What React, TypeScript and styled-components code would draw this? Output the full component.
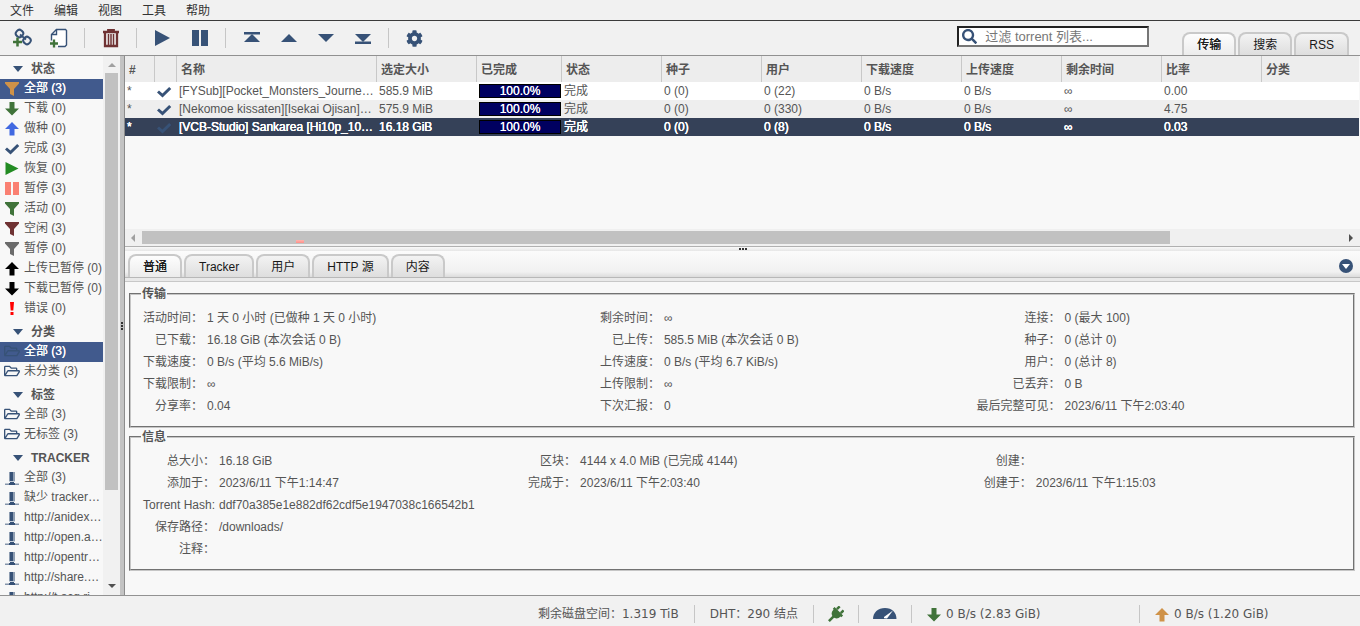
import React from "react";
import styled, { createGlobalStyle, css } from "styled-components";
import { FaCog, FaRegFolderOpen, FaSearch } from "react-icons/fa";

const navy = "#375277";
const green = "#40733a";
const maroon = "#6f3233";
const orange = "#cf9248";

const GlobalStyle = createGlobalStyle`
  * { box-sizing: border-box; }
  body {
    margin: 0;
    background: #f8f8f8;
    color: #555;
    font-family: "Liberation Sans", Arial, "Noto Sans CJK SC", sans-serif;
    font-size: 12px;
    line-height: 16px;
  }
  button, input { font: inherit; color: inherit; }
  button { background: none; border: 0; padding: 0; margin: 0; }
  svg { display: block; flex: none; }
`;

const Shell = styled.div`
  display: flex;
  flex-direction: column;
  height: 100vh;
  overflow: hidden;
`;

const MenuBar = styled.nav`
  display: flex;
  flex: none;
  height: 21px;
  background: #f1f1f1;
  border-bottom: 1px solid #3b3b3b;
`;

const MenuButton = styled.button`
  padding: 2px 10px 0;
  color: #333;
  line-height: 18px;
`;

const Toolbar = styled.header`
  display: flex;
  flex: none;
  height: 35px;
  padding: 0 11px 0 3px;
  background: #f1f1f1;
  border-bottom: 1px solid #919191;
`;

const ToolButton = styled.button`
  display: flex;
  align-items: center;
  justify-content: center;
  width: 37px;
`;

const ToolDivider = styled.span`
  align-self: center;
  width: 1px;
  height: 20px;
  margin: 0 7px;
  background: #c6c6c6;
`;

const SearchBox = styled.label`
  display: flex;
  align-items: center;
  gap: 8px;
  width: 192px;
  height: 21px;
  margin: 5px 33px 0 auto;
  padding: 0 3px;
  background: #fff;
  border: 2px solid;
  border-color: #222 #767676 #767676 #222;
`;

const SearchInput = styled.input`
  flex: 1;
  min-width: 0;
  height: 17px;
  padding: 0;
  border: 0;
  outline: 0;
  background: transparent;
  font-size: 13px;
  &::placeholder { color: #777; opacity: 1; }
`;

const TabList = styled.div<{ $top?: boolean }>`
  display: flex;
  align-items: flex-end;
  gap: 2px;
  ${(p) => p.$top && css`padding-top: 11px;`}
`;

const Tab = styled.button<{ $active?: boolean }>`
  height: 23px;
  padding: 1px 13px 0;
  line-height: 20px;
  color: #181818;
  border: 2px solid #c9c9c9;
  border-bottom: 0;
  border-radius: 8px 8px 0 0;
  background: linear-gradient(#f3f3f3, #dedede);
  white-space: nowrap;
  ${(p) =>
    p.$active &&
    css`
      background: linear-gradient(#fdfdfd, #ececec);
      text-shadow: 0 0 0 #181818;
    `}
`;

const Body = styled.div`
  display: flex;
  flex: 1;
  min-height: 0;
`;

const Sidebar = styled.aside`
  display: flex;
  flex: none;
  width: 120px;
`;

const FilterScroll = styled.div`
  flex: 1;
  min-width: 0;
  overflow: hidden;
`;

const FilterHeading = styled.h2`
  display: flex;
  align-items: center;
  height: 23px;
  margin: 0;
  padding: 4px 0 0 13px;
  font-size: 12px;
  font-weight: bold;
  line-height: 19px;
  & > svg { margin: 0 8px 2px 0; }
`;

const FilterList = styled.ul`
  margin: 0;
  padding: 0;
  list-style: none;
`;

const FilterRow = styled.button<{ $selected?: boolean }>`
  display: flex;
  align-items: center;
  gap: 4px;
  width: 100%;
  height: 20px;
  padding: 0 0 2px 4px;
  overflow: hidden;
  line-height: 18px;
  white-space: nowrap;
  color: ${(p) => (p.$selected ? "#fff" : "#555")};
  background: ${(p) => (p.$selected ? "#415a8d" : "transparent")};
  text-shadow: ${(p) => (p.$selected ? "0 0 0 #fff" : "none")};
`;

const VScroll = styled.div`
  display: flex;
  flex-direction: column;
  align-items: center;
  width: 17px;
  padding: 5px 2px 6px;
  background: #f1f1f1;
`;

const VThumb = styled.div`
  width: 13px;
  height: 79%;
  margin: 4px 0 auto;
  background: #c1c1c1;
`;

const VSplitter = styled.div`
  display: flex;
  flex: none;
  align-items: center;
  justify-content: center;
  width: 5px;
  background: #c3c3c3;
  border-right: 1px solid #8c8c8c;
`;

const Main = styled.main`
  display: flex;
  flex: 1;
  flex-direction: column;
  min-width: 0;
`;

const TorrentPane = styled.section`
  display: flex;
  flex: none;
  flex-direction: column;
  height: 191px;
  border-bottom: 1px solid #b0b0b0;
`;

const TorrentScroll = styled.div`
  flex: 1;
  overflow: hidden;
  padding-right: 1px;
`;

const TorrentTable = styled.table`
  width: 100%;
  table-layout: fixed;
  border-collapse: separate;
  border-spacing: 0;
`;

const HeadCell = styled.th`
  height: 26px;
  padding: 2px 4px 0;
  background: #ededed;
  border-right: 1px solid #c8c8c8;
  text-align: left;
  font-weight: bold;
  white-space: nowrap;
  &:last-child { border-right: 0; }
`;

const TorrentRow = styled.tr<{ $selected?: boolean }>`
  background: #fff;
  &:nth-child(even) { background: #eee; }
  ${(p) =>
    p.$selected &&
    css`
      background: #354158;
      color: #fff;
      text-shadow: 0 0 0 #fff, 0 0 0 #fff;
    `}
`;

const Cell = styled.td`
  height: 18px;
  padding: 0 2px;
  overflow: hidden;
  line-height: 18px;
  white-space: nowrap;
`;

const CheckCell = styled(Cell)`
  padding: 0 0 0 1px;
`;

const BarCell = styled(Cell)`
  padding: 0 1px 0 2px;
`;

const ProgressBar = styled.div`
  height: 14px;
  border: 1px solid #000;
  background: #000060;
  color: #fff;
  text-align: center;
  line-height: 12px;
  text-shadow: 0 0 0 #fff;
`;

const HScroll = styled.div`
  display: flex;
  align-items: center;
  gap: 4px;
  height: 17px;
  padding: 0 6px 0 5px;
  background: #f0f0f0;
`;

const HThumb = styled.div`
  position: relative;
  flex: none;
  width: 84%;
  height: 13px;
  margin-right: auto;
  background: #c1c1c1;
`;

const ThumbMark = styled.span`
  position: absolute;
  left: 154px;
  bottom: 1px;
  width: 8px;
  height: 3px;
  background: linear-gradient(#ffb4ae, #ff8f88);
`;

const HSplitter = styled.div`
  display: flex;
  flex: none;
  align-items: center;
  justify-content: center;
  height: 4px;
  background: linear-gradient(#f8f8f8, #e6e6e6);
`;

const DetailTabs = styled.div`
  display: flex;
  flex: none;
  align-items: flex-end;
  justify-content: space-between;
  height: 27px;
  padding: 0 7px 0 3px;
  background: linear-gradient(#fbfbfb, #f1f1f1 80%, #dcdcdc);
  border-bottom: 1px solid #b8b8b8;
`;

const CollapseButton = styled.button`
  align-self: center;
  padding-top: 3px;
`;

const TabRule = styled.div`
  flex: none;
  height: 4px;
  background: #e9e9e9;
  border-bottom: 1px solid #c8c8c8;
`;

const Details = styled.div`
  flex: 1;
  min-height: 0;
  overflow: hidden;
  padding: 4px 5px 0 4px;
`;

const Group = styled.fieldset`
  min-width: 0;
  margin: 0 0 1px;
  padding: 5px 12px 9px;
  border: 2px groove #c6c6c6;
`;

const GroupTitle = styled.legend`
  margin-left: -2px;
  padding: 0 1px;
  font-weight: bold;
`;

const InfoTable = styled.table`
  width: 100%;
  table-layout: fixed;
  border-collapse: collapse;
`;

const Label = styled.th`
  height: 22px;
  padding: 0 4px 0 0;
  text-align: right;
  font-weight: normal;
  white-space: nowrap;
`;

const Value = styled.td`
  height: 22px;
  padding: 0;
  white-space: nowrap;
`;

const Footer = styled.footer`
  display: flex;
  flex: none;
  align-items: center;
  justify-content: flex-end;
  height: 31px;
  padding: 5px 0 0;
  background: #f1f1f1;
  border-top: 1px solid #929292;
  font-family: "DejaVu Sans", Verdana, "Noto Sans CJK SC", sans-serif;
`;

const FooterItem = styled.div<{ $size?: "text" | "wide" }>`
  display: flex;
  align-items: center;
  gap: 4px;
  height: 18px;
  padding: 0 ${(p) => (p.$size === "text" ? 15 : 14)}px;
  border-left: 1px solid #c6c6c6;
  white-space: nowrap;
  ${(p) => p.$size === "wide" && css`width: 228px;`}
  &:first-child { border-left: 0; }
  &:last-child { width: 221px; }
`;

type IconName =
  | "filter" | "down" | "up" | "check" | "play" | "pause" | "error" | "folder" | "tracker";

const ItemIcon = ({ name, color = navy }: { name: IconName; color?: string }) => {
  if (name === "folder") return <FaRegFolderOpen size={16} color={color} />;
  return (
    <svg width="16" height="16" viewBox="0 0 16 16" fill={color} aria-hidden="true">
      {name === "filter" && <path d="M1 2h14v1.500L10 9v7l-4-2V9L1 3.500z" />}
      {name === "down" && <path d="M5.500 2h5v6.500H15l-7 7-7-7h4.500z" />}
      {name === "up" && <path d="M5.500 15.500h5V9H15L8 2 1 9h4.500z" />}
      {name === "check" && <path d="M2 8.500l4.500 4L14.200 5" fill="none" stroke={color} strokeWidth="3" />}
      {name === "play" && <path d="M1.500 2l13 6.500-13 6.500z" />}
      {name === "pause" && <path d="M1 2h6v13H1zM9 2h6v13H9z" />}
      {name === "error" && <path d="M6 2h4l-.7 8.500H6.700zM6.500 12h3v3h-3z" />}
      {name === "tracker" && (
        <>
          <path d="M5 3h6v9H5z" opacity=".55" />
          <path d="M6 3h3v9H6z" />
          <path d="M5 12h6v1H5z" fill="#c8d0da" />
          <path d="M6 13h4v1H6z" />
          <path d="M5 14h6v2H5z" />
          <path d="M1 14.500h14V16H1z" opacity=".6" />
        </>
      )}
    </svg>
  );
};

const Triangle = ({ up = false, rule = false }: { up?: boolean; rule?: boolean }) => (
  <svg width="18" height="14" viewBox="0 0 18 14" fill={navy} aria-hidden="true">
    <g transform={up ? undefined : "rotate(180 9 7)"}>
      <path d="M1 11l8-8 8 8z" />
      {rule && <path d="M1 1h16v2.500H1z" />}
    </g>
  </svg>
);

const AddLinkIcon = () => (
  <svg width="20" height="20" viewBox="0 0 20 20" fill="none" aria-hidden="true">
    <g stroke={navy} strokeWidth="2">
      <rect x="4" y="2" width="7" height="7" rx="3" transform="rotate(40 7.500 5.500)" />
      <rect x="11.500" y="9" width="7" height="7" rx="3" transform="rotate(40 15 12.500)" />
      <path d="M8 6.500l6 5" />
    </g>
    <path d="M1 14h9M5.500 9.500v9" stroke={green} strokeWidth="2.500" />
  </svg>
);

const AddFileIcon = () => (
  <svg width="20" height="20" viewBox="0 0 20 20" fill="none" aria-hidden="true">
    <path d="M9 18.500h7l1.500-1.500V2.500L16.500 1.500H7.500L2.500 6.500v6" fill="#fff" stroke={navy} strokeWidth="1.400" />
    <path d="M7.500 1.500v5h-5" stroke={navy} strokeWidth="1.400" />
    <path d="M1 15.500h8M5 11.500v8" stroke={green} strokeWidth="2.300" />
  </svg>
);

const TrashIcon = () => (
  <svg width="18" height="20" viewBox="0 0 18 20" fill="none" stroke={maroon} aria-hidden="true">
    <path d="M1 4h16" strokeWidth="2.500" />
    <path d="M6 3.500V2h6v1.500" strokeWidth="1.800" />
    <path d="M3 5v13h12V5" strokeWidth="2.300" />
    <path d="M6.500 6v11M9 6v11M11.500 6v11" strokeWidth="1.500" />
  </svg>
);

const PlugIcon = () => (
  <svg width="16" height="16" viewBox="0 0 16 16" fill={green} aria-hidden="true">
    <g transform="rotate(45 8 8)">
      <path d="M4 0h2.500v4H4zM9.500 0H12v4H9.500z" />
      <path d="M2 4h12v2.500h-1C13 10 11 12 8 12s-5-2-5-5.500H2z" />
      <path d="M6.700 11h2.600v7H6.700z" />
    </g>
  </svg>
);

const GaugeIcon = () => (
  <svg width="24" height="12" viewBox="0 0 24 12" aria-hidden="true">
    <path d="M0 11C0 4.500 5 0 12 0s11.500 4.500 11.500 11z" fill={navy} />
    <path d="M11 9L20 2.500 14 10.500l-3-.2z" fill="#fff" />
  </svg>
);

const Grip = ({ vertical = false }: { vertical?: boolean }) => (
  <svg width={vertical ? 2 : 8} height={vertical ? 8 : 2} fill="#333" aria-hidden="true">
    {[0, 3, 6].map((n) => (
      <rect key={n} x={vertical ? 0 : n} y={vertical ? n : 0} width="2" height="2" />
    ))}
  </svg>
);

type Filter = { icon: IconName; color?: string; text: string; selected?: boolean };

const filterGroups: { title: string; items: Filter[] }[] = [
  {
    title: "状态",
    items: [
      { icon: "filter", color: orange, text: "全部 (3)", selected: true },
      { icon: "down", color: green, text: "下载 (0)" },
      { icon: "up", color: "#4169e1", text: "做种 (0)" },
      { icon: "check", text: "完成 (3)" },
      { icon: "play", color: "#228b22", text: "恢复 (0)" },
      { icon: "pause", color: "#fa8072", text: "暂停 (3)" },
      { icon: "filter", color: green, text: "活动 (0)" },
      { icon: "filter", color: maroon, text: "空闲 (3)" },
      { icon: "filter", color: "#6b6b6b", text: "暂停 (0)" },
      { icon: "up", color: "#000", text: "上传已暂停 (0)" },
      { icon: "down", color: "#000", text: "下载已暂停 (0)" },
      { icon: "error", color: "#f00", text: "错误 (0)" },
    ],
  },
  {
    title: "分类",
    items: [
      { icon: "folder", text: "全部 (3)", selected: true },
      { icon: "folder", text: "未分类 (3)" },
    ],
  },
  {
    title: "标签",
    items: [
      { icon: "folder", text: "全部 (3)" },
      { icon: "folder", text: "无标签 (3)" },
    ],
  },
  {
    title: "TRACKER",
    items: [
      "全部 (3)",
      "缺少 tracker…",
      "http://anidex…",
      "http://open.a…",
      "http://opentr…",
      "http://share.…",
      "http://t.acg.ri…",
    ].map((text) => ({ icon: "tracker" as const, text })),
  },
];

const columns: [string, number | undefined][] = [
  ["#", 30], ["", 22], ["名称", 200], ["选定大小", 100], ["已完成", 85], ["状态", 100],
  ["种子", 100], ["用户", 100], ["下载速度", 100], ["上传速度", 100], ["剩余时间", 100],
  ["比率", 100], ["分类", undefined],
];

const torrents = [
  { name: "[FYSub][Pocket_Monsters_Journe…", size: "585.9 MiB", peers: "0 (22)", ratio: "0.00" },
  { name: "[Nekomoe kissaten][Isekai Ojisan]…", size: "575.9 MiB", peers: "0 (330)", ratio: "4.75" },
  { name: "[VCB-Studio] Sankarea [Hi10p_10…", size: "16.18 GiB", peers: "0 (8)", ratio: "0.03", selected: true },
];

const transferRows = [
  ["活动时间：", "1 天 0 小时 (已做种 1 天 0 小时)", "剩余时间：", "∞", "连接：", "0 (最大 100)"],
  ["已下载：", "16.18 GiB (本次会话 0 B)", "已上传：", "585.5 MiB (本次会话 0 B)", "种子：", "0 (总计 0)"],
  ["下载速度：", "0 B/s (平均 5.6 MiB/s)", "上传速度：", "0 B/s (平均 6.7 KiB/s)", "用户：", "0 (总计 8)"],
  ["下载限制：", "∞", "上传限制：", "∞", "已丢弃：", "0 B"],
  ["分享率：", "0.04", "下次汇报：", "0", "最后完整可见：", "2023/6/11 下午2:03:40"],
];

const infoRows = [
  ["总大小：", "16.18 GiB", "区块：", "4144 x 4.0 MiB (已完成 4144)", "创建：", ""],
  ["添加于：", "2023/6/11 下午1:14:47", "完成于：", "2023/6/11 下午2:03:40", "创建于：", "2023/6/11 下午1:15:03"],
  ["Torrent Hash:", "ddf70a385e1e882df62cdf5e1947038c166542b1"],
  ["保存路径：", "/downloads/"],
  ["注释：", ""],
];

const InfoGroup = ({ title, rows, widths }: { title: string; rows: string[][]; widths: (string | number | undefined)[] }) => (
  <Group>
    <GroupTitle>{title}</GroupTitle>
    <InfoTable>
      <colgroup>
        {widths.map((width, i) => <col key={i} width={width} />)}
      </colgroup>
      <tbody>
        {rows.map((row) => (
          <tr key={row[0]}>
            {row.map((text, i) =>
              i % 2 === 0 ? (
                <Label key={i} scope="row">{text}</Label>
              ) : (
                <Value key={i} colSpan={row.length === 2 ? 5 : 1}>{text}</Value>
              )
            )}
          </tr>
        ))}
      </tbody>
    </InfoTable>
  </Group>
);

const ScrollArrow = ({ points, color = "#505050" }: { points: string; color?: string }) => (
  <svg width="8" height="8" viewBox="0 0 8 8" fill={color} aria-hidden="true">
    <polygon points={points} />
  </svg>
);

export default function App() {
  return (
    <Shell>
      <GlobalStyle />
      <MenuBar>
        {["文件", "编辑", "视图", "工具", "帮助"].map((m) => <MenuButton key={m}>{m}</MenuButton>)}
      </MenuBar>
      <Toolbar>
        <ToolButton aria-label="添加链接"><AddLinkIcon /></ToolButton>
        <ToolButton aria-label="添加文件"><AddFileIcon /></ToolButton>
        <ToolDivider />
        <ToolButton aria-label="删除"><TrashIcon /></ToolButton>
        <ToolDivider />
        <ToolButton aria-label="恢复">
          <svg width="16" height="18" fill={navy}><path d="M0 1l15 8-15 8z" /></svg>
        </ToolButton>
        <ToolButton aria-label="暂停">
          <svg width="18" height="18" fill={navy}><path d="M1 1h7v16H1zM10 1h7v16h-7z" /></svg>
        </ToolButton>
        <ToolDivider />
        <ToolButton aria-label="移到顶部"><Triangle up rule /></ToolButton>
        <ToolButton aria-label="上移"><Triangle up /></ToolButton>
        <ToolButton aria-label="下移"><Triangle /></ToolButton>
        <ToolButton aria-label="移到底部"><Triangle rule /></ToolButton>
        <ToolDivider />
        <ToolButton aria-label="设置"><FaCog size={17} color={navy} /></ToolButton>
        <SearchBox>
          <FaSearch size={15} color={navy} />
          <SearchInput type="text" aria-label="过滤" placeholder="过滤 torrent 列表..." />
        </SearchBox>
        <TabList $top>
          <Tab $active>传输</Tab>
          <Tab>搜索</Tab>
          <Tab>RSS</Tab>
        </TabList>
      </Toolbar>
      <Body>
        <Sidebar>
          <FilterScroll>
            {filterGroups.map((group) => (
              <section key={group.title}>
                <FilterHeading>
                  <svg width="10" height="6" fill={navy}><path d="M0 0h10L5 6z" /></svg>
                  {group.title}
                </FilterHeading>
                <FilterList>
                  {group.items.map((item, i) => (
                    <li key={i}>
                      <FilterRow $selected={item.selected}>
                        <ItemIcon name={item.icon} color={item.color} />
                        <span>{item.text}</span>
                      </FilterRow>
                    </li>
                  ))}
                </FilterList>
              </section>
            ))}
          </FilterScroll>
          <VScroll>
            <ScrollArrow points="0,6 4,2 8,6" color="#a0a0a0" />
            <VThumb />
            <ScrollArrow points="0,3 8,3 4,7" />
          </VScroll>
        </Sidebar>
        <VSplitter><Grip vertical /></VSplitter>
        <Main>
          <TorrentPane>
            <TorrentScroll>
              <TorrentTable>
                <colgroup>
                  {columns.map(([title, width]) => <col key={title} width={width} />)}
                </colgroup>
                <thead>
                  <tr>
                    {columns.map(([title]) => <HeadCell key={title} scope="col">{title}</HeadCell>)}
                  </tr>
                </thead>
                <tbody>
                  {torrents.map((t) => (
                    <TorrentRow key={t.name} $selected={t.selected}>
                      <Cell>*</Cell>
                      <CheckCell><ItemIcon name="check" /></CheckCell>
                      <Cell>{t.name}</Cell>
                      <Cell>{t.size}</Cell>
                      <BarCell><ProgressBar>100.0%</ProgressBar></BarCell>
                      <Cell>完成</Cell>
                      <Cell>0 (0)</Cell>
                      <Cell>{t.peers}</Cell>
                      <Cell>0 B/s</Cell>
                      <Cell>0 B/s</Cell>
                      <Cell>∞</Cell>
                      <Cell>{t.ratio}</Cell>
                      <Cell />
                    </TorrentRow>
                  ))}
                </tbody>
              </TorrentTable>
            </TorrentScroll>
            <HScroll>
              <ScrollArrow points="5,0 5,8 1,4" color="#a0a0a0" />
              <HThumb><ThumbMark /></HThumb>
              <ScrollArrow points="3,0 3,8 7,4" />
            </HScroll>
          </TorrentPane>
          <HSplitter><Grip /></HSplitter>
          <DetailTabs>
            <TabList>
              <Tab $active>普通</Tab>
              <Tab>Tracker</Tab>
              <Tab>用户</Tab>
              <Tab>HTTP 源</Tab>
              <Tab>内容</Tab>
            </TabList>
            <CollapseButton aria-label="折叠">
              <svg width="14" height="14">
                <circle cx="7" cy="7" r="7" fill={navy} />
                <path d="M3 5h8L7 10z" fill="#fff" />
              </svg>
            </CollapseButton>
          </DetailTabs>
          <TabRule />
          <Details>
            <InfoGroup title="传输" rows={transferRows} widths={[64, "32.8%", 64, "26.1%", 88, undefined]} />
            <InfoGroup title="信息" rows={infoRows} widths={[76, "25.8%", 52, "33.7%", 52, undefined]} />
          </Details>
        </Main>
      </Body>
      <Footer>
        <FooterItem $size="text">剩余磁盘空间：1.319 TiB</FooterItem>
        <FooterItem $size="text">DHT：290 结点</FooterItem>
        <FooterItem><PlugIcon /></FooterItem>
        <FooterItem><GaugeIcon /></FooterItem>
        <FooterItem $size="wide"><ItemIcon name="down" color={green} />0 B/s (2.83 GiB)</FooterItem>
        <FooterItem $size="wide"><ItemIcon name="up" color={orange} />0 B/s (1.20 GiB)</FooterItem>
      </Footer>
    </Shell>
  );
}
